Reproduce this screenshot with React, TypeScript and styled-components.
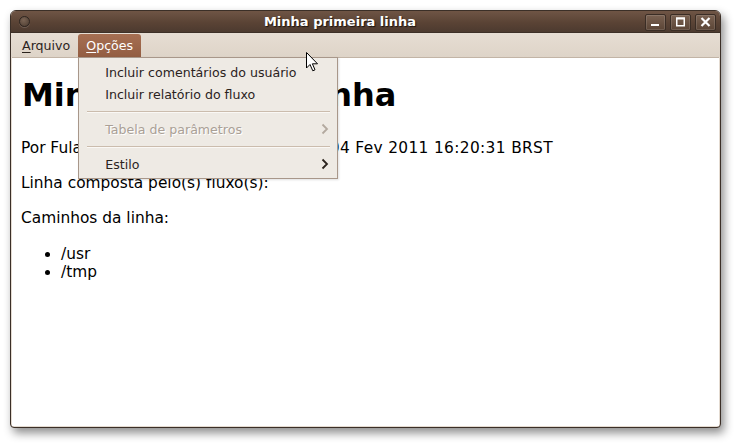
import React from "react";
import styled, { createGlobalStyle } from "styled-components";

const GlobalStyle = createGlobalStyle`
  html, body {
    margin: 0;
    padding: 0;
    background: #ffffff;
  }
  body {
    font-family: "DejaVu Sans", "Liberation Sans", sans-serif;
  }
`;

const Desktop = styled.div`
  width: 739px;
  height: 445px;
  padding: 10px 0 0 10px;
  box-sizing: border-box;
`;

const Window = styled.div`
  position: relative;
  width: 711px;
  height: 418px;
  display: flex;
  flex-direction: column;
  box-sizing: border-box;
  background: #e4dbd1;
  border: 1px solid #3b2f27;
  border-radius: 6px 6px 4px 4px;
  box-shadow: 3px 5px 10px rgba(0, 0, 0, 0.45);
`;

const TitleBar = styled.div`
  height: 21px;
  display: flex;
  align-items: center;
  padding: 0 4px 0 8px;
  border-radius: 5px 5px 0 0;
  background: linear-gradient(#6f5545, #5a4335 55%, #4c3a2f);
  border-bottom: 1px solid #3d3027;
`;

const RoundButton = styled.div`
  width: 9px;
  height: 9px;
  border-radius: 50%;
  border: 1px solid #2e2520;
  background: radial-gradient(circle at 40% 35%, #7a6454, #4b3b30);
  box-shadow: 0 1px 0 rgba(255, 255, 255, 0.15);
`;

const Title = styled.div`
  flex: 1;
  text-align: center;
  padding-left: 5px;
  color: #ffffff;
  font-weight: bold;
  font-size: 13px;
  text-shadow: 1px 1px 1px #1c140f;
`;

const Buttons = styled.div`
  display: flex;
  gap: 4px;
  margin-top: 1px;
`;

const FrameButton = styled.div`
  width: 19px;
  height: 15px;
  display: flex;
  align-items: center;
  justify-content: center;
  border: 1px solid #3a2d25;
  border-radius: 2px;
  background: linear-gradient(#7a6252, #5b4536);
  box-shadow: inset 0 0 0 1px rgba(255, 255, 255, 0.12);
`;

const MenuBar = styled.div`
  height: 24px;
  display: flex;
  align-items: flex-end;
  padding-left: 3px;
  background: linear-gradient(#e6ddd3, #ded4c8);
  font-size: 12.6px;
`;

const MenuTitle = styled.div<{ $open?: boolean }>`
  position: relative;
  height: 23px;
  display: flex;
  align-items: center;
  padding: 0 8px;
  border-radius: 3px 3px 0 0;
  color: ${(p) => (p.$open ? "#ffffff" : "#2b231d")};
  background: ${(p) =>
    p.$open ? "linear-gradient(#a66f52, #935d42)" : "transparent"};

  u {
    text-decoration: underline;
    text-underline-offset: 2px;
  }
`;

const Dropdown = styled.div`
  position: absolute;
  top: 23px;
  left: 0;
  width: 258px;
  padding: 3px 0;
  background: #eeeae4;
  border: 1px solid #a8978a;
  box-shadow: 1px 1px 2px rgba(0, 0, 0, 0.12);
  z-index: 5;
`;

const Item = styled.div<{ $disabled?: boolean }>`
  height: 22px;
  display: flex;
  align-items: center;
  justify-content: space-between;
  padding: 0 8px 0 26px;
  color: ${(p) => (p.$disabled ? "#aaa096" : "#2b231d")};
  text-shadow: ${(p) => (p.$disabled ? "1px 1px 0 #ffffff" : "none")};
  white-space: nowrap;
`;

const Separator = styled.div`
  height: 13px;
  display: flex;
  align-items: center;
  padding: 0 7px 0 8px;

  &::before {
    content: "";
    flex: 1;
    height: 1px;
    background: #cbbcad;
    box-shadow: 0 1px 0 #faf8f5;
  }
`;

const Content = styled.div`
  flex: 1;
  margin: 0 1px 1px;
  background: #ffffff;
  border-top: 1px solid #c2b4a6;
  padding: 0 10px 0 9px;
  font-size: 15.4px;
  line-height: 18px;
  color: #000000;
  overflow: hidden;
`;

const Heading = styled.h1`
  font-size: 32px;
  line-height: 38px;
  font-weight: bold;
  margin: 18px 0 25px 1px;
`;

const Para = styled.p`
  margin: 17px 0;
  white-space: nowrap;
`;

const Timestamp = styled.span`
  letter-spacing: 0.35px;
`;

const List = styled.ul`
  margin: 18px 0;
  padding-left: 40px;
`;

const Cursor = styled.svg`
  position: absolute;
  left: 295px;
  top: 41px;
  z-index: 10;
`;

const Chevron = ({ color }: { color: string }) => (
  <svg width="8" height="12" viewBox="0 0 8 12">
    <path d="M1.5 1.5 L6 6 L1.5 10.5" fill="none" stroke={color} strokeWidth="1.8" />
  </svg>
);

export default function App() {
  return (
    <>
      <GlobalStyle />
      <Desktop>
        <Window>
          <TitleBar>
            <RoundButton />
            <Title>Minha primeira linha</Title>
            <Buttons>
              <FrameButton>
                <svg width="11" height="10" viewBox="0 0 11 10">
                  <rect x="1" y="7" width="8" height="2" fill="#ffffff" />
                </svg>
              </FrameButton>
              <FrameButton>
                <svg width="11" height="10" viewBox="0 0 11 10">
                  <rect x="1.75" y="1.25" width="7.5" height="7.5" fill="none" stroke="#ffffff" strokeWidth="1.5" />
                  <rect x="1" y="0.5" width="9" height="2" fill="#ffffff" />
                </svg>
              </FrameButton>
              <FrameButton>
                <svg width="11" height="10" viewBox="0 0 11 10">
                  <path d="M1.5 1 L9.5 9 M9.5 1 L1.5 9" stroke="#ffffff" strokeWidth="2.2" />
                </svg>
              </FrameButton>
            </Buttons>
          </TitleBar>
          <MenuBar>
            <MenuTitle>
              <span>
                <u>A</u>rquivo
              </span>
            </MenuTitle>
            <MenuTitle $open>
              <span>
                <u>O</u>pções
              </span>
              <Dropdown>
                <Item>Incluir comentários do usuário</Item>
                <Item>Incluir relatório do fluxo</Item>
                <Separator />
                <Item $disabled>
                  Tabela de parâmetros
                  <Chevron color="#b3a99f" />
                </Item>
                <Separator />
                <Item>
                  Estilo
                  <Chevron color="#2b231d" />
                </Item>
              </Dropdown>
            </MenuTitle>
          </MenuBar>
          <Content>
            <Heading>Minha primeira linha</Heading>
            <Para>
              Por Fulano de Tal (fulano) em sexta, dia <Timestamp>04 Fev 2011 16:20:31 BRST</Timestamp>
            </Para>
            <Para>Linha composta pelo(s) fluxo(s):</Para>
            <Para>Caminhos da linha:</Para>
            <List>
              <li>/usr</li>
              <li>/tmp</li>
            </List>
          </Content>
          <Cursor width="13" height="20" viewBox="0 0 13 20">
            <path
              d="M0.5 0.5 L0.5 16 L4 12.5 L6.8 18.8 L9 17.8 L6.4 11.8 L11.5 11.8 Z"
              fill="#ffffff"
              stroke="#000000"
              strokeWidth="1"
              strokeLinejoin="round"
            />
          </Cursor>
        </Window>
      </Desktop>
    </>
  );
}
